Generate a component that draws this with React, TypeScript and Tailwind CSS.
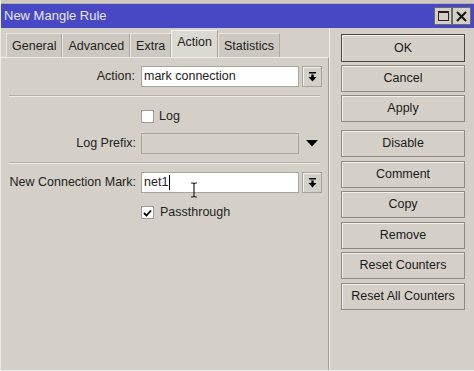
import React from "react";

const font = { fontFamily: '"Liberation Sans", Arial, sans-serif' };

function DropBtn() {
  return (
    <div className="w-[20px] h-[21px] ml-[3px] bg-[#d4d0c8] border border-[#a8a49c] shadow-[inset_1px_1px_0_#f4f2ee] flex items-center justify-center">
      <svg width="9" height="10" viewBox="0 0 9 10">
        <rect x="1" y="0" width="7" height="1.5" fill="#000" />
        <rect x="3.3" y="2.5" width="2.4" height="3" fill="#000" />
        <polygon points="0.5,5 8.5,5 4.5,9.5" fill="#000" />
      </svg>
    </div>
  );
}

function Btn({ label, def }: { label: string; def?: boolean }) {
  return (
    <div
      className={
        "flex items-center justify-center bg-[#d4d0c8] text-[#1a1a1a] shadow-[inset_1px_1px_0_#f2f0ec] " +
        (def ? "h-[28px] border border-[#4a4844]" : "h-[27px] border border-[#8e8a82]")
      }
    >
      {label}
    </div>
  );
}

function Sep() {
  return <div className="mx-[8px] h-[2px] border-t border-[#b4b0a8] border-b border-b-[#eeebe6]" />;
}

export default function App() {
  const tabs = ["General", "Advanced", "Extra", "Action", "Statistics"];
  return (
    <div
      className="w-[474px] h-[371px] bg-[#d4d0c8] flex flex-col overflow-hidden text-[12.5px] text-[#222] border-l border-[#eeebe6] border-b"
      style={font}
    >
      <div className="h-[4px] bg-[#cdc9c2] border-b border-[#b8b4ac]" />
      <div className="h-[24px] bg-[#4848c4] flex items-center justify-between pl-[3px] pr-[3px]">
        <span className="text-[#e6e6f4] text-[13px]">New Mangle Rule</span>
        <div className="flex">
          <div className="w-[18px] h-[18px] bg-[#d4d0c8] border border-[#6c6a66] flex items-center justify-center">
            <div className="w-[11px] h-[10px] border border-[#222] border-t-2" />
          </div>
          <div className="w-[19px] h-[18px] bg-[#d4d0c8] border border-[#6c6a66] flex items-center justify-center">
            <svg width="11" height="11" viewBox="0 0 11 11">
              <path d="M1 1 L10 10 M10 1 L1 10" stroke="#111" strokeWidth="2" />
            </svg>
          </div>
        </div>
      </div>
      <div className="flex flex-1">
        <div className="w-[328px] flex flex-col">
          <div className="h-[29px] flex items-end pl-[5px]">
            {tabs.map((t) => {
              const sel = t === "Action";
              return (
                <div
                  key={t}
                  className={
                    "px-[5px] flex items-center border-l border-t border-r " +
                    (sel
                      ? "h-[27px] bg-[#dcd9d2] border-l-[#f4f2ee] border-t-[#f4f2ee] border-r-[#a8a49c] pb-[3px]"
                      : "h-[24px] bg-[#ccc8c0] border-l-[#e8e5e0] border-t-[#e8e5e0] border-r-[#b0aca4] pt-[2px]")
                  }
                >
                  {t}
                </div>
              );
            })}
          </div>
          <div className="flex-1 border-t border-[#f0eee8] border-r border-r-[#a09c94] relative">
            <div className="mt-[8px] flex items-center">
              <div className="w-[135px] text-right pr-[1px]">Action:</div>
              <div className="ml-[5px] w-[158px] h-[21px] bg-white border border-[#a8a49c] flex items-center pl-[2px]">
                mark connection
              </div>
              <DropBtn />
            </div>
            <div className="mt-[8px]">
              <Sep />
            </div>
            <div className="mt-[13px] flex items-center pl-[140px] h-[13px]">
              <div className="w-[13px] h-[13px] bg-white border border-[#a09c94]" />
              <span className="ml-[5px]">Log</span>
            </div>
            <div className="mt-[10px] flex items-center">
              <div className="w-[135px] text-right">Log Prefix:</div>
              <div className="ml-[5px] w-[158px] h-[21px] bg-[#d4d0c8] border border-[#aaa69e]" />
              <div className="ml-[7px] w-[12px] flex items-center">
                <svg width="12" height="7" viewBox="0 0 12 7">
                  <polygon points="0,0 12,0 6,6.5" fill="#000" />
                </svg>
              </div>
            </div>
            <div className="mt-[8px]">
              <Sep />
            </div>
            <div className="mt-[8px] flex items-center">
              <div className="w-[135px] text-right pl-[8px] whitespace-nowrap">New Connection Mark:</div>
              <div className="ml-[5px] w-[158px] h-[21px] bg-white border border-[#a8a49c] flex items-center pl-[2px]">
                <span>net1</span>
                <span className="w-px h-[15px] bg-black ml-[1px]" />
              </div>
              <DropBtn />
            </div>
            <div className="mt-[13px] flex items-center pl-[140px] h-[13px]">
              <div className="w-[13px] h-[13px] bg-white border border-[#a09c94] flex items-center justify-center">
                <svg width="9" height="8" viewBox="0 0 9 8">
                  <path d="M1 4 L3.5 6.5 L8 1.5" stroke="#000" strokeWidth="1.8" fill="none" />
                </svg>
              </div>
              <span className="ml-[6px]">Passthrough</span>
            </div>
            <svg className="absolute left-[189px] top-[124px]" width="8" height="16" viewBox="0 0 8 16">
              <path d="M1 1 H3 L4 2 L5 1 H7 M4 2 V14 M1 15 H3 L4 14 L5 15 H7" stroke="#222" strokeWidth="1.2" fill="none" />
            </svg>
          </div>
        </div>
        <div className="w-px bg-[#eeebe6]" />
        <div className="pl-[11px] pt-[6px] w-[135px] flex flex-col">
          <div className="flex flex-col gap-[3px]">
            <Btn label="OK" def />
            <Btn label="Cancel" />
            <Btn label="Apply" />
          </div>
          <div className="mt-[8px] flex flex-col gap-[3.5px]">
            <Btn label="Disable" />
            <Btn label="Comment" />
            <Btn label="Copy" />
            <Btn label="Remove" />
            <Btn label="Reset Counters" />
            <Btn label="Reset All Counters" />
          </div>
        </div>
      </div>
    </div>
  );
}
